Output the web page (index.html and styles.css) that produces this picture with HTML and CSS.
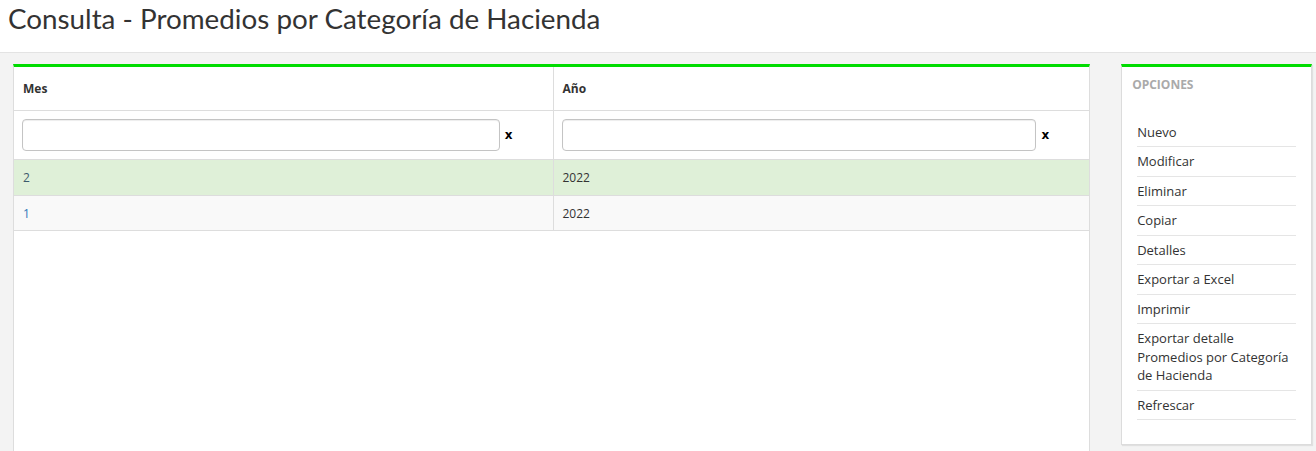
FILE: index.html
```html
<!DOCTYPE html>
<html lang="es">
<head>
<meta charset="utf-8">
<title>Consulta - Promedios por Categoría de Hacienda</title>
<link rel="stylesheet" href="styles.css">
</head>
<body>
<header class="page-header">
  <h1 class="page-title">Consulta - Promedios por Categoría de Hacienda</h1>
</header>
<div class="content">
  <section class="panel">
    <table class="grid">
      <thead>
        <tr class="head-row">
          <th class="col col-first">Mes</th>
          <th class="col">Año</th>
        </tr>
        <tr class="filter-row">
          <td><div class="filter"><input class="filter-input" type="text"><span class="filter-x">x</span></div></td>
          <td><div class="filter"><input class="filter-input" type="text"><span class="filter-x">x</span></div></td>
        </tr>
      </thead>
      <tbody>
        <tr class="row selected">
          <td class="cell-key">2</td>
          <td>2022</td>
        </tr>
        <tr class="row striped">
          <td class="cell-key link">1</td>
          <td>2022</td>
        </tr>
      </tbody>
    </table>
  </section>
  <aside class="sidebar">
    <h2 class="sidebar-title">OPCIONES</h2>
    <ul class="menu">
      <li class="menu-item">Nuevo</li>
      <li class="menu-item">Modificar</li>
      <li class="menu-item">Eliminar</li>
      <li class="menu-item">Copiar</li>
      <li class="menu-item">Detalles</li>
      <li class="menu-item">Exportar a Excel</li>
      <li class="menu-item">Imprimir</li>
      <li class="menu-item">Exportar detalle Promedios por Categoría de Hacienda</li>
      <li class="menu-item">Refrescar</li>
    </ul>
  </aside>
</div>
</body>
</html>
```

FILE: styles.css
```css
* { box-sizing: border-box; }
html, body { margin: 0; padding: 0; }
body {
  background: #f3f3f3;
  font-family: "Open Sans", "DejaVu Sans", sans-serif;
  color: #333;
  height: 451px;
  overflow: hidden;
}
.page-header {
  background: #fff;
  height: 53px;
  border-bottom: 1px solid #e3e3e3;
  padding: 0 0 0 8px;
}
.page-title {
  margin: 0;
  font-family: Lato, "Liberation Sans", sans-serif;
  font-weight: 400;
  font-size: 27.8px;
  line-height: 37px;
  color: #333;
}
.content {
  display: flex;
  align-items: flex-start;
  gap: 31px;
  padding: 11px 4px 0 13px;
}
.panel {
  width: 1078px;
  height: 400px;
  background: #fff;
  border: 1px solid #ddd;
  border-top: 3px solid #00dc00;
  border-bottom: none;
}
.grid {
  width: 100%;
  border-collapse: collapse;
  font-size: 12px;
  line-height: 17px;
  table-layout: fixed;
}
.grid th, .grid td {
  text-align: left;
  border-bottom: 1px solid #ddd;
  border-right: 1px solid #ddd;
  padding: 9px 9px 8.5px;
}
.grid tr > :last-child { border-right: none; }
.head-row th {
  font-weight: 700;
  padding: 13px 9px 13px;
}
.col-first { width: 539px; }
.filter-row td { padding: 8px 8px 8px 8px; }
.filter {
  display: flex;
  align-items: center;
  padding-right: 32px;
}
.filter-input {
  flex: 1;
  min-width: 0;
  height: 32px;
  border: 1px solid #c4c4c4;
  border-radius: 4px;
  box-shadow: inset 0 1px 1px rgba(0,0,0,.075);
  background: #fff;
  margin: 0;
}
.filter-x {
  font-weight: 700;
  font-size: 12px;
  color: #000;
  margin-left: 5px;
  font-family: "DejaVu Sans", sans-serif;
}
.row.selected { background: #dff0d8; }
.row.striped { background: #f9f9f9; }
.selected .cell-key { color: #3d5a6c; }
.striped .link { color: #2f78b8; }
.sidebar {
  width: 191px;
  background: #fff;
  border: 1px solid #dcdcdc;
  border-top: 3px solid #00dc00;
  box-shadow: 1px 1px 1px rgba(0,0,0,.08);
  padding: 9px 15px 24px 10px;
}
.sidebar-title {
  margin: 0 0 24.5px 0;
  font-size: 12px;
  line-height: 17px;
  font-weight: 700;
  color: #aaa;
}
.menu {
  list-style: none;
  margin: 0;
  padding: 0 0 0 5px;
}
.menu-item {
  font-size: 13px;
  line-height: 18.5px;
  padding: 5px 0 5px;
  border-bottom: 1px solid #e5e5e5;
  color: #333;
}
```
